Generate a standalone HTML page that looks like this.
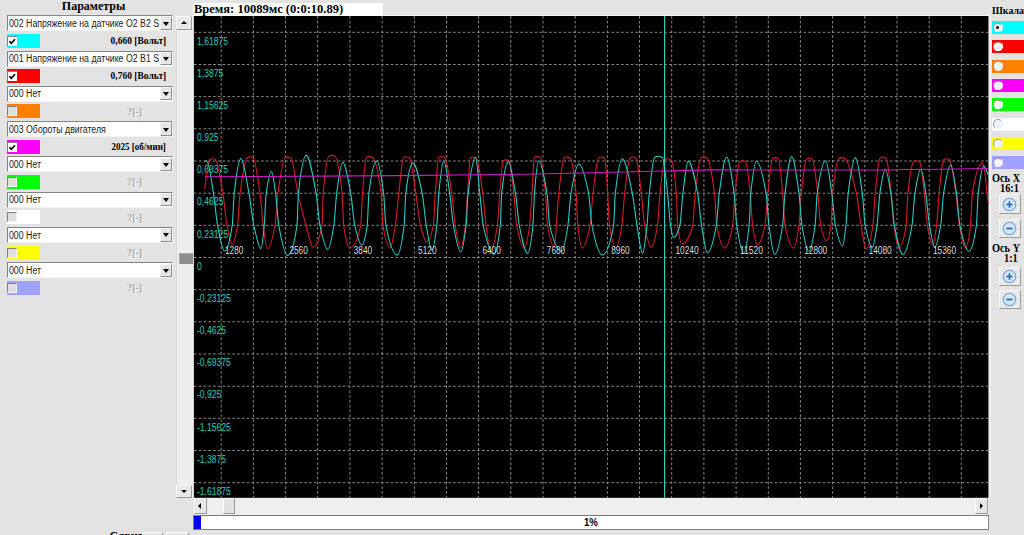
<!DOCTYPE html>
<html lang="ru"><head><meta charset="utf-8"><title>Параметры</title>
<style>
html,body{margin:0;padding:0}
body{width:1024px;height:535px;overflow:hidden;position:relative;background:#e3e3e3;font-family:"Liberation Sans",sans-serif}
div,span{box-sizing:border-box}
.ser{font-family:"Liberation Serif",serif;font-weight:bold;color:#000;position:absolute;white-space:nowrap;line-height:1}
.dd{position:absolute;left:6.8px;width:166.6px;height:16px;background:#fff;border:1px solid #858585;border-right-color:#f2f2f2;border-bottom-color:#f2f2f2;overflow:hidden}
.ddt{position:absolute;left:1.6px;top:1.6px;font-size:10px;line-height:11px;color:#1a1a1a;white-space:nowrap;transform:scaleX(.876);transform-origin:0 0}
.ddb{position:absolute;right:0;top:.3px;width:12.4px;height:13.3px;background:#e6e6e6;border-right:1px solid #8e8e8e;border-bottom:1px solid #8e8e8e;border-left:1px solid #f6f6f6;border-top:1px solid #f6f6f6}
.ddb i{position:absolute;left:1.5px;top:4.2px;width:0;height:0;border-left:3.8px solid transparent;border-right:3.8px solid transparent;border-top:4.2px solid #000}
.sw{position:absolute;left:6.6px;width:33.2px;height:14px}
.cb{position:absolute;left:.8px;top:2px;width:9.8px;height:10px;border-top:1px solid #808080;border-left:1px solid #808080}
.cb.on{background:#fff}
.cb.off{background:#dedede;border-right:1px solid #f4f4f4;border-bottom:1px solid #f4f4f4}
.cb svg{position:absolute;left:-.3px;top:-.1px}
.val{position:absolute;right:858.2px;transform-origin:100% 0;font:bold 9.6px/11px "Liberation Serif",serif;color:#000;white-space:nowrap}

.dis{position:absolute;left:127.2px;font:bold 10px/11px "Liberation Serif",serif;color:#aaaaaa;text-shadow:1px 1px 0 #fafafa;white-space:nowrap}
.vsb{position:absolute;left:176.2px;top:15.5px;width:17.8px;height:482.5px;background:#eeeeee;box-shadow:inset 1px 0 0 #d6d6d6}
.sbtn{position:absolute;background:#e8e8e8;border-top:1px solid #fafafa;border-left:1px solid #fafafa;border-right:1px solid #9a9a9a;border-bottom:1px solid #9a9a9a}
.tri{position:absolute;width:0;height:0}
.hsb{position:absolute;left:193.5px;top:498px;width:795px;height:16.5px;background:#efefef}
.pb{position:absolute;left:193.2px;top:515.3px;width:795.5px;height:14.3px;background:#fff;border:1.4px solid #787878;border-right-color:#8a8a8a;border-bottom-color:#7c7c7c}
.pbf{position:absolute;left:0;top:0;width:6.4px;height:100%;background:#0000f0}
.pbt{position:absolute;left:389.6px;top:.3px;font:bold 10px/11px "Liberation Sans",sans-serif;color:#000;transform:scaleX(.96);transform-origin:0 0}
.rs{position:absolute;left:991.8px;width:33px;height:13.2px}
.rd{position:absolute;left:1.2px;top:1.6px;width:9.6px;height:9.6px;border-radius:50%;background:#eef4fb;border:1px solid #9a9a9a;border-right-color:#f4f4f4;border-bottom-color:#f4f4f4}
.rd b{position:absolute;left:2.3px;top:2.3px;width:3.2px;height:3.2px;border-radius:50%;background:#000}
.zb{position:absolute;left:998.5px;width:22px;height:19.5px;background:#e9e9e9;border-top:1px solid #f8f8f8;border-left:1px solid #f8f8f8;border-right:1.3px solid #9c9c9c;border-bottom:1.3px solid #9c9c9c}
.zb svg{position:absolute;left:2.8px;top:1.6px}
</style></head><body>
<div class="ser" style="left:61.8px;top:0.2px;font-size:12px">Параметры</div>
<div class="dd" style="top:15.2px"><span class="ddt">002 Напряжение на датчике O2 B2 S</span><div class="ddb"><i></i></div></div>
<div class="sw" style="top:33.8px;background:#00ffff"><div class="cb on"><svg width=9 height=9 viewBox="0 0 9 9"><path d="M1.4 4.2L3.3 6.3L7.0 2.2" stroke="#000" stroke-width="1.7" fill="none"/></svg></div></div>
<div class="val" style="top:35.0px;transform:scaleX(0.99)">0,660 [Вольт]</div>
<div class="dd" style="top:50.5px"><span class="ddt">001 Напряжение на датчике O2 B1 S</span><div class="ddb"><i></i></div></div>
<div class="sw" style="top:69.1px;background:#ff0000"><div class="cb on"><svg width=9 height=9 viewBox="0 0 9 9"><path d="M1.4 4.2L3.3 6.3L7.0 2.2" stroke="#000" stroke-width="1.7" fill="none"/></svg></div></div>
<div class="val" style="top:70.3px;transform:scaleX(0.99)">0,760 [Вольт]</div>
<div class="dd" style="top:85.8px"><span class="ddt">000 Нет</span><div class="ddb"><i></i></div></div>
<div class="sw" style="top:104.4px;background:#ff8000"><div class="cb off"></div></div>
<div class="dis" style="top:105.6px">?[-]</div>
<div class="dd" style="top:121.1px"><span class="ddt">003 Обороты двигателя</span><div class="ddb"><i></i></div></div>
<div class="sw" style="top:139.7px;background:#ff00ff"><div class="cb on"><svg width=9 height=9 viewBox="0 0 9 9"><path d="M1.4 4.2L3.3 6.3L7.0 2.2" stroke="#000" stroke-width="1.7" fill="none"/></svg></div></div>
<div class="val" style="top:140.9px;transform:scaleX(0.94)">2025 [об/мин]</div>
<div class="dd" style="top:156.4px"><span class="ddt">000 Нет</span><div class="ddb"><i></i></div></div>
<div class="sw" style="top:175.0px;background:#00ff00"><div class="cb off"></div></div>
<div class="dis" style="top:176.2px">?[-]</div>
<div class="dd" style="top:191.7px"><span class="ddt">000 Нет</span><div class="ddb"><i></i></div></div>
<div class="sw" style="top:210.3px;background:#ffffff"><div class="cb off"></div></div>
<div class="dis" style="top:211.5px">?[-]</div>
<div class="dd" style="top:227.0px"><span class="ddt">000 Нет</span><div class="ddb"><i></i></div></div>
<div class="sw" style="top:245.6px;background:#ffff00"><div class="cb off"></div></div>
<div class="dis" style="top:246.8px">?[-]</div>
<div class="dd" style="top:262.3px"><span class="ddt">000 Нет</span><div class="ddb"><i></i></div></div>
<div class="sw" style="top:280.9px;background:#a0a0ff"><div class="cb off"></div></div>
<div class="dis" style="top:282.1px">?[-]</div>
<div class="vsb">
  <div class="sbtn" style="left:0;top:.5px;width:16.2px;height:13.6px"><div class="tri" style="left:4px;top:4px;border-left:3.4px solid transparent;border-right:3.4px solid transparent;border-bottom:3.6px solid #000"></div></div>
  <div style="position:absolute;left:2.8px;top:237.5px;width:14.2px;height:10.8px;background:#8d8d8d;border-top:1px solid #a8a8a8;border-left:1px solid #a8a8a8"></div>
  <div class="sbtn" style="left:0;top:469.5px;width:16.2px;height:13px"><div class="tri" style="left:4px;top:4.4px;border-left:3.4px solid transparent;border-right:3.4px solid transparent;border-top:3.6px solid #000"></div></div>
</div>
<div style="position:absolute;left:193.2px;top:3px;width:190px;height:13.2px;background:#fff"></div>
<div class="ser" style="left:194px;top:3.4px;font-size:12.5px">Время: 10089мс (0:0:10.89)</div>
<svg width="1024" height="535" viewBox="0 0 1024 535" style="position:absolute;left:0;top:0" font-family="'Liberation Sans', sans-serif">
<rect x="193.9" y="16" width="794.5" height="481.8" fill="#000"/>
<path d="M221.2 16V497.8M253.4 16V497.8M285.6 16V497.8M317.7 16V497.8M349.9 16V497.8M382.1 16V497.8M414.3 16V497.8M446.5 16V497.8M478.6 16V497.8M510.8 16V497.8M543.0 16V497.8M575.2 16V497.8M607.4 16V497.8M639.5 16V497.8M671.7 16V497.8M703.9 16V497.8M736.1 16V497.8M768.3 16V497.8M800.4 16V497.8M832.6 16V497.8M864.8 16V497.8M897.0 16V497.8M929.2 16V497.8M961.3 16V497.8M193.9 32.3H988.4M193.9 64.5H988.4M193.9 96.6H988.4M193.9 128.8H988.4M193.9 161.0H988.4M193.9 193.2H988.4M193.9 225.3H988.4M193.9 257.5H988.4M193.9 289.7H988.4M193.9 321.8H988.4M193.9 354.0H988.4M193.9 386.2H988.4M193.9 418.3H988.4M193.9 450.5H988.4M193.9 482.7H988.4" stroke="#8a8a8a" stroke-width="1" stroke-dasharray="2.6 2.2" fill="none"/>
<g fill="#2ccbbb" font-size="10">
<text x="197" y="44.5" textLength="31.0" lengthAdjust="spacingAndGlyphs">1,61875</text>
<text x="197" y="76.7" textLength="26.2" lengthAdjust="spacingAndGlyphs">1,3875</text>
<text x="197" y="108.8" textLength="31.0" lengthAdjust="spacingAndGlyphs">1,15625</text>
<text x="197" y="141.0" textLength="21.4" lengthAdjust="spacingAndGlyphs">0,925</text>
<text x="197" y="173.2" textLength="31.0" lengthAdjust="spacingAndGlyphs">0,69375</text>
<text x="197" y="205.4" textLength="26.2" lengthAdjust="spacingAndGlyphs">0,4625</text>
<text x="197" y="237.5" textLength="31.0" lengthAdjust="spacingAndGlyphs">0,23125</text>
<text x="197" y="269.7" textLength="4.8" lengthAdjust="spacingAndGlyphs">0</text>
<text x="197" y="301.9" textLength="33.8" lengthAdjust="spacingAndGlyphs">-0,23125</text>
<text x="197" y="334.0" textLength="29.0" lengthAdjust="spacingAndGlyphs">-0,4625</text>
<text x="197" y="366.2" textLength="33.8" lengthAdjust="spacingAndGlyphs">-0,69375</text>
<text x="197" y="398.4" textLength="24.2" lengthAdjust="spacingAndGlyphs">-0,925</text>
<text x="197" y="430.5" textLength="33.8" lengthAdjust="spacingAndGlyphs">-1,15625</text>
<text x="197" y="462.7" textLength="29.0" lengthAdjust="spacingAndGlyphs">-1,3875</text>
<text x="197" y="494.9" textLength="33.8" lengthAdjust="spacingAndGlyphs">-1,61875</text>
</g>
<path d="M204.7 189.0C206.3 179.2 207.8 160.6 209.4 159.7C210.4 159.1 211.4 158.7 212.4 158.7C213.4 158.7 214.4 159.1 215.4 159.7C217.9 161.1 220.4 178.7 222.9 193.4C224.3 201.4 225.6 218.4 227.0 225.5C228.7 234.2 230.3 244.6 232.0 244.6C233.8 244.6 235.7 236.2 237.5 225.5C238.4 220.5 239.2 200.1 240.1 193.4C242.4 175.6 244.7 159.1 247.0 157.8C248.0 157.2 249.0 156.8 250.0 156.8C251.0 156.8 252.0 157.2 253.0 157.8C255.3 159.1 257.7 177.2 260.0 193.4C261.1 201.0 262.2 217.3 263.3 225.5C264.6 235.4 266.0 249.2 267.3 249.2C269.9 249.2 272.4 239.0 275.0 225.5C276.0 220.4 276.9 200.4 277.9 193.4C280.3 176.2 282.6 159.4 285.0 158.1C286.0 157.5 287.0 157.1 288.0 157.1C289.0 157.1 290.0 157.5 291.0 158.1C293.3 159.4 295.6 183.2 297.9 193.4C300.6 205.6 303.4 216.0 306.1 225.5C308.4 233.5 310.7 247.2 313.0 247.2C316.0 247.2 319.0 242.4 322.0 225.5C322.4 223.3 322.8 198.1 323.2 193.4C325.2 170.2 327.1 157.5 329.1 156.4C330.1 155.8 331.1 155.4 332.1 155.4C333.1 155.4 334.1 155.8 335.1 156.4C337.4 157.7 339.7 171.8 342.0 193.4C342.6 198.7 343.1 221.6 343.7 225.5C345.8 240.0 347.9 248.0 350.0 248.0C353.6 248.0 357.1 242.0 360.7 225.5C361.3 222.7 361.9 201.1 362.5 193.4C363.8 177.2 365.0 158.3 366.3 157.5C367.3 156.9 368.3 156.5 369.3 156.5C370.3 156.5 371.3 157.0 372.3 157.5C375.3 159.1 378.2 170.7 381.2 193.4C381.8 198.0 382.4 221.9 383.0 225.5C385.4 240.1 387.9 247.5 390.3 247.5C392.0 247.5 393.6 235.6 395.3 225.5C396.5 218.4 397.6 203.1 398.8 193.4C400.4 180.3 401.9 158.7 403.5 157.8C404.5 157.2 405.5 156.8 406.5 156.8C407.5 156.8 408.5 157.2 409.5 157.8C411.6 159.0 413.7 180.4 415.8 193.4C417.4 203.1 418.9 219.4 420.5 225.5C422.5 233.5 424.6 241.8 426.6 241.8C428.8 241.8 431.1 236.4 433.3 225.5C434.0 222.3 434.6 202.2 435.3 193.4C436.4 178.9 437.5 158.2 438.6 157.5C439.6 156.9 440.6 156.5 441.6 156.5C442.6 156.5 443.6 156.9 444.6 157.5C447.0 158.8 449.3 177.4 451.7 193.4C452.9 201.3 454.0 218.7 455.2 225.5C457.0 236.2 458.9 248.1 460.7 248.1C462.3 248.1 463.8 237.8 465.4 225.5C466.1 220.0 466.8 202.8 467.5 193.4C468.5 180.0 469.5 158.6 470.5 158.0C471.5 157.4 472.5 157.0 473.5 157.0C474.5 157.0 475.5 157.4 476.5 158.0C478.6 159.2 480.6 178.1 482.7 193.4C483.8 201.5 484.9 217.7 486.0 225.5C487.5 236.3 489.1 250.3 490.6 250.3C492.9 250.3 495.1 240.0 497.4 225.5C498.2 220.6 498.9 202.1 499.7 193.4C500.9 180.2 502.0 161.4 503.2 160.7C504.2 160.1 505.2 159.7 506.2 159.7C507.2 159.7 508.2 160.1 509.2 160.7C510.7 161.6 512.3 179.9 513.8 193.4C514.8 201.9 515.7 220.6 516.7 225.5C519.3 238.6 521.9 248.1 524.5 248.1C526.2 248.1 527.9 237.5 529.6 225.5C530.4 219.8 531.2 204.9 532.0 193.4C532.8 182.3 533.5 158.0 534.3 157.5C535.3 156.8 536.3 156.5 537.3 156.5C538.3 156.5 539.3 156.9 540.3 157.5C542.0 158.5 543.8 176.0 545.5 193.4C546.2 200.4 546.9 221.3 547.6 225.5C549.8 238.9 552.1 247.1 554.3 247.1C555.0 247.1 555.6 233.3 556.3 225.5C557.1 215.8 558.0 201.0 558.8 193.4C560.6 177.3 562.3 159.0 564.1 158.0C565.1 157.4 566.1 157.0 567.1 157.0C568.1 157.0 569.1 157.4 570.1 158.0C572.1 159.1 574.1 173.5 576.1 193.4C576.7 199.0 577.2 220.3 577.8 225.5C579.2 238.2 580.6 248.1 582.0 248.1C584.7 248.1 587.4 238.8 590.1 225.5C591.1 220.7 592.0 201.4 593.0 193.4C594.9 177.9 596.7 159.1 598.6 158.0C599.6 157.4 600.6 157.0 601.6 157.0C602.6 157.0 603.6 157.4 604.6 158.0C605.6 158.7 606.7 178.7 607.7 193.4C608.3 201.9 608.9 221.5 609.5 225.5C611.7 239.9 613.8 248.1 616.0 248.1C617.9 248.1 619.9 237.3 621.8 225.5C622.8 219.6 623.7 201.7 624.7 193.4C626.5 178.3 628.2 159.0 630.0 158.0C631.0 157.4 632.0 157.0 633.0 157.0C634.0 157.0 635.0 157.4 636.0 158.0C637.8 159.0 639.5 179.2 641.3 193.4C642.4 202.2 643.5 219.7 644.6 225.5C646.8 236.8 648.9 247.1 651.1 247.1C653.2 247.1 655.4 238.0 657.5 225.5C658.3 220.6 659.2 201.0 660.0 193.4C661.7 178.1 663.3 160.7 665.0 159.7C666.0 159.1 667.0 158.7 668.0 158.7C669.0 158.7 670.0 159.1 671.0 159.7C672.8 160.7 674.6 172.4 676.4 193.4C676.8 198.1 677.2 222.1 677.6 225.5C679.1 237.8 680.5 243.9 682.0 243.9C685.6 243.9 689.2 238.5 692.8 225.5C693.6 222.6 694.4 200.5 695.2 193.4C697.1 176.3 699.1 159.1 701.0 158.0C702.0 157.4 703.0 157.0 704.0 157.0C705.0 157.0 706.0 157.4 707.0 158.0C709.5 159.4 712.0 174.1 714.5 193.4C715.3 199.3 716.0 221.3 716.8 225.5C719.4 239.6 721.9 248.1 724.5 248.1C727.2 248.1 730.0 239.9 732.7 225.5C733.5 221.5 734.2 200.7 735.0 193.4C736.5 178.7 738.1 162.7 739.6 161.8C740.6 161.2 741.6 160.8 742.6 160.8C743.6 160.8 744.6 161.2 745.6 161.8C747.1 162.7 748.7 179.0 750.2 193.4C751.0 200.9 751.8 220.3 752.6 225.5C754.2 236.2 755.9 245.0 757.5 245.0C760.0 245.0 762.4 237.0 764.9 225.5C765.9 221.0 766.8 202.0 767.8 193.4C769.4 179.1 771.0 159.6 772.6 158.6C773.6 158.0 774.6 157.6 775.6 157.6C776.6 157.6 777.6 158.0 778.6 158.6C779.9 159.4 781.3 179.1 782.6 193.4C783.4 202.0 784.2 221.5 785.0 225.5C787.9 240.0 790.9 248.1 793.8 248.1C795.5 248.1 797.3 237.6 799.0 225.5C799.8 219.9 800.6 201.1 801.4 193.4C803.0 178.0 804.6 160.2 806.2 159.2C807.2 158.6 808.2 158.2 809.2 158.2C810.2 158.2 811.2 158.6 812.2 159.2C814.1 160.3 815.9 178.2 817.8 193.4C818.8 201.2 819.7 221.2 820.7 225.5C822.7 234.3 824.6 240.7 826.6 240.7C828.1 240.7 829.5 235.0 831.0 225.5C831.6 221.8 832.1 199.0 832.7 193.4C834.7 173.8 836.6 159.7 838.6 158.6C839.6 158.0 840.6 157.6 841.6 157.6C842.6 157.6 843.6 158.1 844.6 158.6C848.5 160.6 852.5 176.2 856.4 193.4C858.0 200.2 859.5 216.6 861.1 225.5C862.7 234.8 864.4 249.2 866.0 249.2C868.3 249.2 870.6 239.6 872.9 225.5C873.7 220.8 874.4 201.0 875.2 193.4C876.8 177.2 878.5 159.0 880.1 158.0C881.1 157.4 882.1 157.0 883.1 157.0C884.1 157.0 885.1 157.4 886.1 158.0C887.8 159.0 889.5 178.1 891.2 193.4C892.1 201.5 893.0 219.3 893.9 225.5C895.5 236.8 897.2 248.1 898.8 248.1C901.2 248.1 903.7 240.5 906.1 225.5C906.7 221.8 907.3 199.0 907.9 193.4C909.8 175.7 911.7 162.9 913.6 161.8C914.6 161.2 915.6 160.8 916.6 160.8C917.6 160.8 918.6 161.2 919.6 161.8C921.2 162.7 922.7 180.4 924.3 193.4C925.3 201.9 926.4 219.6 927.4 225.5C929.1 235.4 930.9 245.0 932.6 245.0C933.9 245.0 935.3 235.3 936.6 225.5C937.4 219.4 938.3 201.6 939.1 193.4C940.6 179.0 942.0 160.6 943.5 159.7C944.5 159.1 945.5 158.7 946.5 158.7C947.5 158.7 948.5 159.1 949.5 159.7C951.6 160.9 953.8 178.7 955.9 193.4C957.1 201.4 958.2 219.2 959.4 225.5C961.5 236.7 963.5 248.1 965.6 248.1C967.2 248.1 968.9 238.7 970.5 225.5C971.1 220.7 971.7 197.0 972.3 193.4C975.8 172.4 979.2 162.9 982.7 162.9C984.6 162.9 986.4 190.3 988.3 204.0" stroke="#dc1a2a" stroke-width="1.08" fill="none"/>
<path d="M204.6 162.0C205.2 161.5 205.9 160.5 206.5 160.5C208.8 160.5 211.2 179.4 213.5 193.4C214.9 201.6 216.2 218.5 217.6 225.5C219.9 237.5 222.3 251.0 224.6 251.0C227.1 251.0 229.7 241.6 232.2 225.5C232.9 221.3 233.5 199.2 234.2 193.4C236.4 174.2 238.6 158.6 240.8 158.6C243.5 158.6 246.3 179.1 249.0 193.4C250.6 202.0 252.3 218.2 253.9 225.5C256.3 236.0 258.6 248.7 261.0 248.7C262.1 248.7 263.1 236.5 264.2 225.5C264.9 218.6 265.5 198.2 266.2 193.4C268.0 180.7 269.7 171.5 271.5 171.5C272.9 171.5 274.2 183.8 275.6 193.4C276.7 200.9 277.7 219.6 278.8 225.5C281.7 241.6 284.6 255.4 287.5 255.4C290.7 255.4 293.8 247.1 297.0 225.5C297.5 222.3 297.9 197.8 298.4 193.4C301.0 168.8 303.6 155.4 306.2 155.4C309.5 155.4 312.8 175.2 316.1 193.4C317.4 200.6 318.7 219.4 320.0 225.5C322.6 237.8 325.2 249.5 327.8 249.5C329.8 249.5 331.8 237.9 333.8 225.5C334.8 219.5 335.7 200.6 336.7 193.4C338.7 178.7 340.6 162.2 342.6 162.2C345.3 162.2 348.0 178.9 350.7 193.4C352.1 200.7 353.4 219.6 354.8 225.5C357.1 235.5 359.5 245.0 361.8 245.0C363.6 245.0 365.4 237.9 367.2 225.5C367.8 221.6 368.3 197.9 368.9 193.4C371.5 172.8 374.1 160.8 376.7 160.8C379.0 160.8 381.3 175.7 383.6 193.4C384.4 199.3 385.1 221.5 385.9 225.5C389.7 245.0 393.4 255.0 397.2 255.0C399.5 255.0 401.8 243.9 404.1 225.5C404.7 221.0 405.2 198.0 405.8 193.4C408.1 174.5 410.5 162.9 412.8 162.9C415.9 162.9 419.1 178.2 422.2 193.4C423.6 200.0 424.9 217.7 426.3 225.5C428.2 236.3 430.1 250.3 432.0 250.3C433.6 250.3 435.2 239.0 436.8 225.5C437.5 219.9 438.1 200.1 438.8 193.4C440.4 177.1 442.1 160.8 443.7 160.8C445.7 160.8 447.7 179.8 449.7 193.4C450.9 201.8 452.2 218.9 453.4 225.5C455.8 238.5 458.3 252.0 460.7 252.0C462.5 252.0 464.3 240.2 466.1 225.5C466.8 220.0 467.4 198.9 468.1 193.4C470.6 172.9 473.1 157.6 475.6 157.6C477.0 157.6 478.4 181.0 479.8 193.4C481.0 203.7 482.1 220.1 483.3 225.5C486.8 241.8 490.3 254.5 493.8 254.5C496.0 254.5 498.1 244.4 500.3 225.5C500.8 221.4 501.2 197.7 501.7 193.4C503.9 173.1 506.1 161.9 508.3 161.9C510.7 161.9 513.1 179.1 515.5 193.4C516.8 200.9 518.0 219.1 519.3 225.5C522.1 239.7 524.9 253.5 527.7 253.5C529.4 253.5 531.2 241.9 532.9 225.5C533.4 220.5 534.0 200.1 534.5 193.4C535.8 177.1 537.1 160.8 538.4 160.8C541.3 160.8 544.1 175.3 547.0 193.4C547.9 199.1 548.8 221.7 549.7 225.5C553.7 242.6 557.8 251.3 561.8 251.3C563.8 251.3 565.9 238.3 567.9 225.5C568.9 219.0 570.0 199.5 571.0 193.4C573.6 178.0 576.2 164.0 578.8 164.0C582.1 164.0 585.3 177.0 588.6 193.4C589.7 198.9 590.8 220.1 591.9 225.5C595.3 242.3 598.8 255.0 602.2 255.0C606.0 255.0 609.8 246.8 613.6 225.5C614.2 222.3 614.7 198.4 615.3 193.4C617.7 172.5 620.0 158.7 622.4 158.7C625.7 158.7 629.0 177.5 632.3 193.4C633.9 200.9 635.4 216.4 637.0 225.5C638.9 236.3 640.7 253.5 642.6 253.5C644.1 253.5 645.5 238.8 647.0 225.5C647.8 218.5 648.5 200.7 649.3 193.4C651.1 176.5 652.8 158.3 654.6 157.4C655.9 156.7 657.2 156.3 658.5 156.3C659.8 156.3 661.1 156.7 662.4 157.4C664.1 158.3 665.9 178.3 667.6 193.4C668.6 201.8 669.5 219.8 670.5 225.5C671.5 231.4 672.5 237.5 673.5 237.5C675.6 237.5 677.8 232.9 679.9 225.5C680.9 222.0 681.9 201.4 682.9 193.4C684.7 179.3 686.4 161.1 688.2 161.1C691.4 161.1 694.5 177.2 697.7 193.4C699.0 200.0 700.3 217.6 701.6 225.5C703.6 237.4 705.5 253.0 707.5 253.0C710.4 253.0 713.4 241.3 716.3 225.5C717.3 220.3 718.2 200.4 719.2 193.4C721.7 175.6 724.1 157.0 726.6 157.0C729.1 157.0 731.6 175.0 734.1 193.4C735.0 200.0 735.9 219.6 736.8 225.5C739.1 240.5 741.4 253.5 743.7 253.5C745.5 253.5 747.3 241.8 749.1 225.5C749.7 220.4 750.2 198.9 750.8 193.4C752.7 175.1 754.6 161.2 756.5 161.2C759.7 161.2 762.9 175.2 766.1 193.4C767.1 198.9 768.0 218.4 769.0 225.5C770.9 239.2 772.7 254.5 774.6 254.5C777.3 254.5 779.9 242.5 782.6 225.5C783.4 220.4 784.2 200.1 785.0 193.4C787.2 174.9 789.4 156.5 791.6 156.5C794.1 156.5 796.5 175.7 799.0 193.4C800.0 200.6 801.0 219.5 802.0 225.5C804.3 239.0 806.5 251.3 808.8 251.3C810.9 251.3 813.0 240.5 815.1 225.5C815.8 220.5 816.5 198.3 817.2 193.4C820.0 173.7 822.8 160.8 825.6 160.8C827.7 160.8 829.7 179.4 831.8 193.4C833.0 201.5 834.2 220.0 835.4 225.5C837.8 236.5 840.2 246.0 842.6 246.0C843.7 246.0 844.8 235.2 845.9 225.5C846.7 218.8 847.4 199.5 848.2 193.4C850.6 174.2 853.0 157.6 855.4 157.6C857.7 157.6 860.0 176.3 862.3 193.4C863.3 200.6 864.2 220.5 865.2 225.5C867.6 237.8 870.0 247.1 872.4 247.1C873.9 247.1 875.5 235.9 877.0 225.5C878.0 218.9 878.9 199.9 879.9 193.4C881.7 181.5 883.4 169.3 885.2 169.3C887.1 169.3 889.0 182.1 890.9 193.4C892.1 200.4 893.2 219.3 894.4 225.5C897.3 240.6 900.1 254.5 903.0 254.5C906.0 254.5 909.0 242.0 912.0 225.5C913.0 220.2 913.9 199.4 914.9 193.4C916.9 180.9 918.9 169.3 920.9 169.3C922.5 169.3 924.2 183.0 925.8 193.4C927.0 201.2 928.3 218.4 929.5 225.5C931.2 235.4 933.0 247.1 934.7 247.1C936.7 247.1 938.7 237.0 940.7 225.5C941.7 219.9 942.6 199.5 943.6 193.4C946.0 178.5 948.3 165.0 950.7 165.0C952.6 165.0 954.6 180.7 956.5 193.4C957.7 201.0 958.8 219.9 960.0 225.5C962.9 239.6 965.9 251.3 968.8 251.3C971.3 251.3 973.9 242.3 976.4 225.5C977.0 221.5 977.6 198.5 978.2 193.4C980.1 177.6 981.9 166.1 983.8 166.1C985.3 166.1 986.7 172.0 988.2 175.0" stroke="#25cfc6" stroke-width="1.08" fill="none"/>
<path d="M205 176.8L400 175.6L500 174.6L560 173.6L610 172.3L664 171L710 169.9L800 170L890 170L905 169.4L941 169.2L988.4 168.6" stroke="#cf1cc8" stroke-width="1.05" fill="none"/>
<g fill="#dcdcdc" font-size="10">
<text x="225.0" y="253.8" textLength="18.4" lengthAdjust="spacingAndGlyphs">1280</text>
<text x="289.4" y="253.8" textLength="18.4" lengthAdjust="spacingAndGlyphs">2560</text>
<text x="353.7" y="253.8" textLength="18.4" lengthAdjust="spacingAndGlyphs">3840</text>
<text x="418.1" y="253.8" textLength="18.4" lengthAdjust="spacingAndGlyphs">5120</text>
<text x="482.4" y="253.8" textLength="18.4" lengthAdjust="spacingAndGlyphs">6400</text>
<text x="546.8" y="253.8" textLength="18.4" lengthAdjust="spacingAndGlyphs">7680</text>
<text x="611.2" y="253.8" textLength="18.4" lengthAdjust="spacingAndGlyphs">8960</text>
<text x="675.5" y="253.8" textLength="23.0" lengthAdjust="spacingAndGlyphs">10240</text>
<text x="739.9" y="253.8" textLength="23.0" lengthAdjust="spacingAndGlyphs">11520</text>
<text x="804.2" y="253.8" textLength="23.0" lengthAdjust="spacingAndGlyphs">12800</text>
<text x="868.6" y="253.8" textLength="23.0" lengthAdjust="spacingAndGlyphs">14080</text>
<text x="933.0" y="253.8" textLength="23.0" lengthAdjust="spacingAndGlyphs">15360</text>
</g>
<path d="M664.6 16V497.8" stroke="#38d0c4" stroke-width="1.15"/>
</svg>
<div class="hsb">
  <div class="sbtn" style="left:0;top:0;width:13px;height:16px"><div class="tri" style="left:3.4px;top:4px;border-top:3.6px solid transparent;border-bottom:3.6px solid transparent;border-right:3.8px solid #000"></div></div>
  <div class="sbtn" style="left:29px;top:0;width:12.6px;height:16px;background:#e2e2e2"></div>
  <div class="sbtn" style="left:781.5px;top:0;width:13px;height:16px"><div class="tri" style="left:4.4px;top:4px;border-top:3.6px solid transparent;border-bottom:3.6px solid transparent;border-left:3.8px solid #000"></div></div>
</div>
<div class="pb"><div class="pbf"></div><div class="pbt">1%</div></div>
<div class="ser" style="left:109.5px;top:529.6px;font-size:12px">Сдвиг</div>
<div class="sbtn" style="left:142px;top:531.8px;width:20.5px;height:10px"></div>
<div class="sbtn" style="left:166.4px;top:531.8px;width:22.5px;height:10px"></div>
<div style="position:absolute;left:988.6px;top:15.2px;width:2px;height:483px;background:#f0f0f0"></div>
<div style="position:absolute;left:383px;top:15.2px;width:607px;height:1px;background:#f6f6f6"></div>
<div class="ser" style="left:991.9px;top:5px;font-size:11px;transform:scaleX(.9);transform-origin:0 0">Шкала</div>
<div class="rs" style="top:21.0px;background:#00ffff"><div class="rd"><b></b></div></div>
<div class="rs" style="top:40.3px;background:#ff0000"><div class="rd"></div></div>
<div class="rs" style="top:59.7px;background:#ff8000"><div class="rd"></div></div>
<div class="rs" style="top:79.0px;background:#ff00ff"><div class="rd"></div></div>
<div class="rs" style="top:98.3px;background:#00ff00"><div class="rd"></div></div>
<div class="rs" style="top:117.6px;background:#ffffff"><div class="rd"></div></div>
<div class="rs" style="top:137.0px;background:#ffff00"><div class="rd"></div></div>
<div class="rs" style="top:156.3px;background:#a0a0ff"><div class="rd"></div></div>
<div class="ser" style="left:992.3px;top:172px;font-size:12px;transform:scaleX(.86);transform-origin:0 0">Ось X</div>
<div class="ser" style="left:1000.2px;top:181.9px;font-size:12px;transform:scaleX(.86);transform-origin:0 0">16:1</div>
<div class="zb" style="top:194.2px"><svg width="15" height="15" viewBox="0 0 15 15"><circle cx="7.5" cy="7.5" r="6.3" fill="#cfe6fb" stroke="#6f9fd6" stroke-width="1.1"/><path d="M4.3 7.5H10.7M7.5 4.3V10.7" stroke="#2f63b0" stroke-width="1.7"/></svg></div>
<div class="zb" style="top:218.5px"><svg width="15" height="15" viewBox="0 0 15 15"><circle cx="7.5" cy="7.5" r="6.3" fill="#cfe6fb" stroke="#6f9fd6" stroke-width="1.1"/><path d="M4.3 7.5H10.7" stroke="#2f63b0" stroke-width="1.7"/></svg></div>
<div class="ser" style="left:992.3px;top:242.2px;font-size:12px;transform:scaleX(.86);transform-origin:0 0">Ось Y</div>
<div class="ser" style="left:1003.5px;top:252.1px;font-size:12px;transform:scaleX(.86);transform-origin:0 0">1:1</div>
<div class="zb" style="top:266.5px"><svg width="15" height="15" viewBox="0 0 15 15"><circle cx="7.5" cy="7.5" r="6.3" fill="#cfe6fb" stroke="#6f9fd6" stroke-width="1.1"/><path d="M4.3 7.5H10.7M7.5 4.3V10.7" stroke="#2f63b0" stroke-width="1.7"/></svg></div>
<div class="zb" style="top:289.5px"><svg width="15" height="15" viewBox="0 0 15 15"><circle cx="7.5" cy="7.5" r="6.3" fill="#cfe6fb" stroke="#6f9fd6" stroke-width="1.1"/><path d="M4.3 7.5H10.7" stroke="#2f63b0" stroke-width="1.7"/></svg></div>
</body></html>
